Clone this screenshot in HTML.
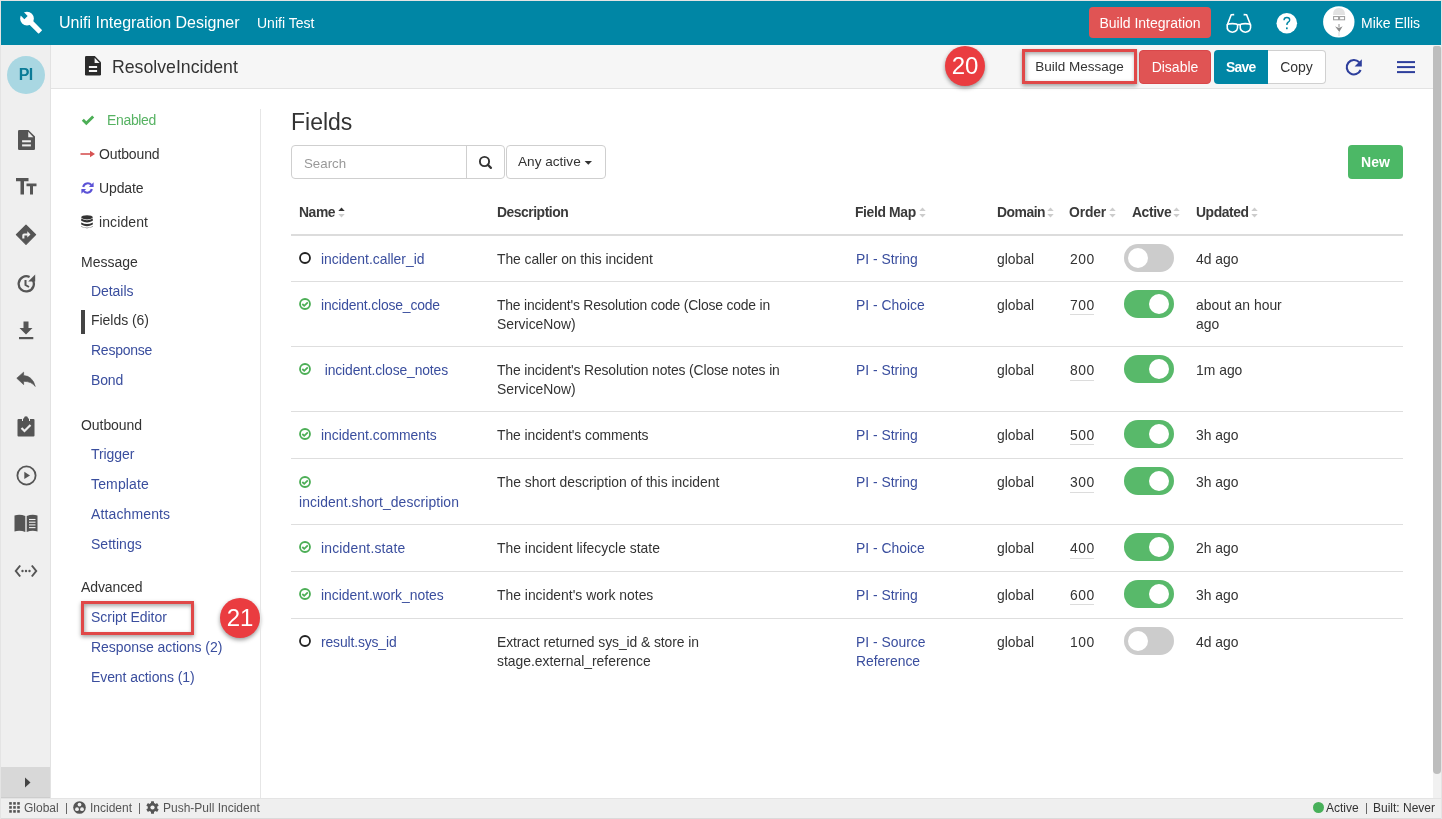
<!DOCTYPE html>
<html><head><meta charset="utf-8">
<style>
*{box-sizing:border-box;margin:0;padding:0}
html,body{width:1442px;height:819px;overflow:hidden;background:#fff;font-family:"Liberation Sans",sans-serif;color:#333}
.a{position:absolute;white-space:nowrap;will-change:transform}
#frame{position:absolute;left:0;top:0;width:1442px;height:819px;border:1px solid #e4e4e4;border-bottom:none;pointer-events:none;z-index:50}
#hdr{position:absolute;left:0;top:0;width:1442px;height:45px;background:#0086a5}
#side{position:absolute;left:0;top:45px;width:51px;height:753px;background:#efefef;border-right:1px solid #e2e2e2}
#ph{position:absolute;left:51px;top:45px;width:1382px;height:44px;background:#f6f6f6;border-bottom:1px solid #e3e3e3}
#status{position:absolute;left:0;top:798px;width:1442px;height:21px;background:#efefef;border-top:1px solid #e4e4e4;border-bottom:1px solid #dadada}
.nav{font-size:14px;color:#333}
.lnk{color:#3a4e9e}
.tbl{font-size:13.9px;color:#333}
.th{font-size:13px;font-weight:bold;color:#3a3a3a}
.btn{position:absolute;border-radius:4px;font-size:14px;text-align:center;white-space:nowrap;will-change:transform}
</style></head><body>
<div id="hdr"></div>
<svg class="a" style="left:0;top:0" width="50" height="45" viewBox="0 0 50 45">
 <g transform="translate(27 18.6) rotate(-45)">
  <circle cx="0" cy="0" r="6.9" fill="#fff"/>
  <rect x="-2.6" y="0" width="5.2" height="19" rx="0.8" fill="#fff"/>
  <rect x="-2.3" y="-8" width="4.6" height="6.6" fill="#0086a5"/>
 </g>
</svg>
<div class="a" id="t_title" style="left:59px;top:13px;font-size:16px;color:#fff;line-height:19px">Unifi Integration Designer</div>
<div class="a" id="t_test" style="left:257px;top:15px;font-size:14px;color:#fff;line-height:17px">Unifi Test</div>
<div class="btn" id="b_bi" style="left:1089px;top:7px;width:122px;height:31px;background:#e05454;color:#fff;line-height:33px">Build Integration</div>
<svg class="a" style="left:1215px;top:0" width="150" height="45" viewBox="1215 0 150 45">
 <g fill="none" stroke="#fff" stroke-width="1.6" stroke-linejoin="round">
  <path d="M1227.2 25.2 Q1227.5 23.6 1232.3 23.6 Q1237.3 23.6 1237.6 25.2 Q1238.3 32 1232.4 32.2 Q1226.6 32 1227.2 25.2 Z"/>
  <path d="M1240.2 25.2 Q1240.5 23.6 1245.3 23.6 Q1250.3 23.6 1250.6 25.2 Q1251.3 32 1245.4 32.2 Q1239.6 32 1240.2 25.2 Z"/>
  <path d="M1237.6 24.6 L1240.2 24.6" stroke-width="1.6"/>
  <path d="M1227.2 25.2 L1231.2 14.8 L1234.2 14.6"/>
  <path d="M1250.6 25.2 L1246.6 14.8 L1243.6 14.6"/>
 </g>
 <circle cx="1286.8" cy="23.2" r="10.3" fill="#fff"/>
 <path d="M1283.3 20.2 Q1283.3 16.8 1286.9 16.8 Q1290.4 16.8 1290.4 19.9 Q1290.4 21.6 1288.6 22.7 Q1287.6 23.4 1287.6 24.9 L1286.2 24.9 Q1286 22.8 1287.5 21.8 Q1289 20.9 1289 19.9 Q1289 18.2 1286.9 18.2 Q1284.8 18.2 1284.7 20.2 Z" fill="#0086a5"/>
 <rect x="1286" y="27.4" width="1.7" height="1.8" fill="#0086a5"/>
 <circle cx="1338.8" cy="21.9" r="15.7" fill="#fff"/>
 <path d="M1333 15 Q1333 8 1339 8 Q1345 8 1345 15 Z" fill="#e2e2e2"/>
 <g fill="none" stroke="#9a9a9a" stroke-width="1"><rect x="1333.6" y="16.6" width="5" height="3.2"/><rect x="1339.6" y="16.6" width="5" height="3.2"/></g>
 <rect x="1338.2" y="24" width="1.6" height="3" fill="#bbb"/>
 <path d="M1335 26.3 Q1339 29 1342.6 26.3 L1339.3 32 Z" fill="#8c8c8c"/>
 <rect x="1338" y="32" width="2" height="4" fill="#ececec"/>
</svg>
<div class="a" id="t_mike" style="left:1361px;top:15px;font-size:14px;color:#fff;line-height:17px">Mike Ellis</div>
<div id="side"></div>
<div class="a" style="left:7px;top:56px;width:38px;height:38px;border-radius:50%;background:#a9d7e2;color:#0b7b97;font-size:16px;font-weight:bold;line-height:38px;text-align:center;letter-spacing:-0.6px;text-indent:-0.6px">PI</div>
<svg class="a" style="left:17.6px;top:129.5px" width="17" height="20" viewBox="0 0 16.6 19.5">
 <path d="M1.3 0 L10.2 0 L16.6 6.3 L16.6 18.2 Q16.6 19.5 15.3 19.5 L1.3 19.5 Q0 19.5 0 18.2 L0 1.3 Q0 0 1.3 0 Z" fill="#555"/>
 <path d="M10 1.7 L10 7 L15 7 Z" fill="#efefef"/>
 <rect x="4" y="10" width="8.6" height="2" fill="#efefef"/>
 <rect x="4" y="14" width="8.6" height="2" fill="#efefef"/>
</svg>
<svg class="a" style="left:16px;top:178px" width="21" height="17" viewBox="0 0 21 17">
 <path d="M0 0 L12.5 0 L12.5 3.3 L8 3.3 L8 16.5 L4.5 16.5 L4.5 3.3 L0 3.3 Z" fill="#555"/>
 <path d="M10.5 5.5 L20.5 5.5 L20.5 8.3 L17 8.3 L17 16.5 L14 16.5 L14 8.3 L10.5 8.3 Z" fill="#555"/>
</svg>
<svg class="a" style="left:15px;top:224px" width="22" height="22" viewBox="0 0 22 22">
 <path d="M11 1.2 L20.6 10.7 L11 20.3 L1.4 10.7 Z" fill="#555" stroke="#555" stroke-linejoin="round" stroke-width="1.2"/>
 <path d="M7.3 14.6 L7.3 11.3 Q7.3 9.5 9.1 9.5 L12.3 9.5 L12.3 7.3 L15.5 10.4 L12.3 13.5 L12.3 11.5 L9.4 11.5 L9.4 14.6 Z" fill="#efefef"/>
</svg>
<svg class="a" style="left:16px;top:273px" width="20" height="21" viewBox="0 0 20 21">
 <path d="M16.5 6.5 A7.6 7.6 0 1 1 13.6 4" fill="none" stroke="#555" stroke-width="2.3"/>
 <path d="M19.2 1.5 L19.2 8.6 L12.2 8.6 Z" fill="#555"/>
 <path d="M9.5 7 L9.5 12 L13 14" fill="none" stroke="#555" stroke-width="2"/>
</svg>
<svg class="a" style="left:17px;top:321px" width="18" height="20" viewBox="0 0 18 20">
 <path d="M6.5 0.5 L11.5 0.5 L11.5 7 L15.5 7 L9 13.5 L2.5 7 L6.5 7 Z" fill="#555"/>
 <rect x="2" y="16" width="14.3" height="2.2" fill="#555"/>
</svg>
<svg class="a" style="left:16px;top:371px" width="20" height="16" viewBox="0 0 20 16">
 <path d="M0.8 7.2 L7.6 1.2 L7.6 4.6 Q16.5 5 19.2 15.4 Q15.5 10.3 7.6 10.3 L7.6 13.6 Z" fill="#555" stroke="#555" stroke-width="0.7" stroke-linejoin="round"/>
</svg>
<svg class="a" style="left:17px;top:416px" width="18" height="21" viewBox="0 0 18 21">
 <path d="M1.5 3 L5 3 L5 5 L13 5 L13 3 L16.5 3 Q17.5 3 17.5 4 L17.5 19.5 Q17.5 20.5 16.5 20.5 L1.5 20.5 Q0.5 20.5 0.5 19.5 L0.5 4 Q0.5 3 1.5 3 Z" fill="#555"/>
 <circle cx="9" cy="2.2" r="2" fill="#555"/><rect x="6" y="2.5" width="6" height="2.5" fill="#555"/>
 <path d="M4.5 12 L7.5 15 L13.5 9" fill="none" stroke="#efefef" stroke-width="2.2"/>
</svg>
<svg class="a" style="left:16px;top:465px" width="21" height="21" viewBox="0 0 21 21">
 <circle cx="10.5" cy="10.5" r="9.1" fill="none" stroke="#555" stroke-width="1.8"/>
 <path d="M8.3 6.8 L14 10.4 L8.3 14 Z" fill="#555"/>
</svg>
<svg class="a" style="left:14px;top:514px" width="24" height="19" viewBox="0 0 24 19">
 <path d="M0.5 1.5 Q6 0 11.3 2 L11.3 18 Q6 16 0.5 17.5 Z" fill="#555"/>
 <path d="M12.7 2 Q18 0 23.5 1.5 L23.5 17.5 Q18 16 12.7 18 Z" fill="#555"/>
 <g stroke="#efefef" stroke-width="1.1"><path d="M15 5.5 L21.5 5.5"/><path d="M15 8.2 L21.5 8.2"/><path d="M15 10.9 L21.5 10.9"/><path d="M15 13.6 L21.5 13.6"/></g>
</svg>
<svg class="a" style="left:14px;top:564px" width="24" height="14" viewBox="0 0 24 14">
 <path d="M6.2 1.5 L1.8 7 L6.2 12.5" fill="none" stroke="#555" stroke-width="2"/>
 <path d="M17.8 1.5 L22.2 7 L17.8 12.5" fill="none" stroke="#555" stroke-width="2"/>
 <circle cx="8.5" cy="7" r="1.2" fill="#555"/><circle cx="12" cy="7" r="1.2" fill="#555"/><circle cx="15.5" cy="7" r="1.2" fill="#555"/>
</svg>
<div class="a" style="left:0;top:767px;width:50px;height:31px;background:#d8d8d8;border-bottom:1px solid #cdcdcd"></div>
<svg class="a" style="left:24px;top:777px" width="8" height="11" viewBox="0 0 8 11"><path d="M1 0.5 L6.5 5.5 L1 10.5 Z" fill="#444"/></svg>
<div id="ph"></div>
<svg class="a" style="left:85px;top:56px" width="16" height="20" viewBox="0 0 16 20">
 <path d="M1.3 0 L9.8 0 L16 6.2 L16 18.3 Q16 19.6 14.7 19.6 L1.3 19.6 Q0 19.6 0 18.3 L0 1.3 Q0 0 1.3 0 Z" fill="#2b2b2b"/>
 <path d="M9.6 1.7 L9.6 7 L14.6 7 Z" fill="#f6f6f6"/>
 <rect x="3.9" y="10" width="8.2" height="2" fill="#f6f6f6"/>
 <rect x="3.9" y="14" width="8.2" height="2" fill="#f6f6f6"/>
</svg>
<div class="a" id="t_ri" style="left:112px;top:57px;font-size:17.7px;color:#333;line-height:21px">ResolveIncident</div>
<div class="a" style="left:945px;top:46px;width:40px;height:40px;border-radius:50%;background:#ea3c40;box-shadow:0 2px 4px rgba(0,0,0,.4);color:#fff;font-size:24px;line-height:39px;text-align:center">20</div>
<div class="btn" id="b_bm" style="left:1022px;top:49px;width:115px;height:35px;border:3px solid #e04848;border-radius:0;background:#fff;color:#333;line-height:29px;font-size:13.5px;box-shadow:0 2px 4px rgba(0,0,0,.35), inset 1px 2px 4px rgba(0,0,0,.35)">Build Message</div>
<div class="btn" id="b_dis" style="left:1139px;top:50px;width:72px;height:34px;background:#e05454;border:1px solid #d9474a;color:#fff;line-height:32px">Disable</div>
<div class="btn" id="b_save" style="left:1214px;top:50px;width:54px;height:34px;background:#0086a5;color:#fff;line-height:34px;border-radius:4px 0 0 4px;font-weight:bold;font-size:13.9px;letter-spacing:-0.7px;text-indent:-0.5px">Save</div>
<div class="btn" id="b_copy" style="left:1268px;top:50px;width:58px;height:34px;background:#fff;color:#333;line-height:32px;border:1px solid #d0d0d0;border-left:none;border-radius:0 4px 4px 0">Copy</div>
<svg class="a" style="left:1340px;top:55px" width="80" height="25" viewBox="1340 55 80 25">
 <path d="M1359.2 62.3 A7.2 7.2 0 1 0 1360.6 70" fill="none" stroke="#2e3f9c" stroke-width="2.1"/>
 <path d="M1361.8 59.2 L1361.8 66.6 L1354.6 66.6 Z" fill="#2e3f9c"/>
 <rect x="1397" y="61.1" width="18" height="2" fill="#2e3f9c"/>
 <rect x="1397" y="66.1" width="18" height="2" fill="#2e3f9c"/>
 <rect x="1397" y="71.1" width="18" height="2" fill="#2e3f9c"/>
</svg>
<svg class="a" style="left:81px;top:115px" width="14" height="11" viewBox="0 0 14 11"><path d="M0.8 5.8 L2.8 3.8 L5.3 6.3 L11.2 0.4 L13.2 2.4 L5.3 10.3 Z" fill="#4cae56"/></svg>
<div class="a nav" id="nv0" style="left:106.5px;top:112.15px;line-height:17px;font-size:14px;color:#56b262;letter-spacing:-0.341px">Enabled</div>
<svg class="a" style="left:80px;top:150px" width="16" height="8" viewBox="0 0 16 8"><path d="M0.5 4 L11 4" stroke="#d65353" stroke-width="1.6"/><path d="M10 0.8 L15 4 L10 7.2 Z" fill="#d65353"/></svg>
<div class="a nav" id="nv1" style="left:98.7px;top:145.65px;line-height:17px;font-size:14px;letter-spacing:-0.124px">Outbound</div>
<svg class="a" style="left:81px;top:182px" width="13" height="12" viewBox="0 0 13 12">
 <path d="M2.2 5 A4.6 4.6 0 0 1 10.3 3" fill="none" stroke="#5b52d6" stroke-width="2.1"/>
 <path d="M12.6 0.3 L12.6 5 L7.9 5 Z" fill="#5b52d6"/>
 <path d="M10.8 7 A4.6 4.6 0 0 1 2.7 9" fill="none" stroke="#5b52d6" stroke-width="2.1"/>
 <path d="M0.4 11.7 L0.4 7 L5.1 7 Z" fill="#5b52d6"/>
</svg>
<div class="a nav" id="nv3" style="left:98.7px;top:179.75px;line-height:17px;font-size:14px;letter-spacing:-0.108px">Update</div>
<svg class="a" style="left:81px;top:215px" width="12" height="14" viewBox="0 0 12 14">
 <ellipse cx="6" cy="2.3" rx="5.8" ry="2.1" fill="#333"/>
 <path d="M0.2 3.6 Q6 6.8 11.8 3.6 L11.8 5.8 Q6 9 0.2 5.8 Z" fill="#333"/>
 <path d="M0.2 7.4 Q6 10.6 11.8 7.4 L11.8 9.6 Q6 12.8 0.2 9.6 Z" fill="#333"/>
 <path d="M0.2 11.2 Q6 14.2 11.8 11.2 L11.8 11.8 Q6 14.6 0.2 11.8 Z" fill="#333"/>
</svg>
<div class="a nav" id="nv4" style="left:98.7px;top:213.85px;line-height:17px;font-size:14px;letter-spacing:0.107px">incident</div>
<div class="a nav" id="nv5" style="left:80.6px;top:254.15px;line-height:17px;font-size:14px;letter-spacing:-0.002px">Message</div>
<div class="a nav lnk" id="nv6" style="left:90.8px;top:283.05px;line-height:17px;font-size:14px;letter-spacing:-0.057px">Details</div>
<div class="a" style="left:81px;top:310px;width:4px;height:24px;background:#444"></div>
<div class="a nav" id="nv7" style="left:90.8px;top:311.85px;line-height:17px;font-size:14px;letter-spacing:-0.035px">Fields (6)</div>
<div class="a nav lnk" id="nv8" style="left:90.8px;top:341.95px;line-height:17px;font-size:14px;letter-spacing:-0.244px">Response</div>
<div class="a nav lnk" id="nv9" style="left:90.8px;top:372.05px;line-height:17px;font-size:14px;letter-spacing:-0.174px">Bond</div>
<div class="a nav" id="nv2" style="left:80.6px;top:416.75px;line-height:17px;font-size:14px;letter-spacing:-0.063px">Outbound</div>
<div class="a nav lnk" id="nv10" style="left:90.8px;top:445.95px;line-height:17px;font-size:14px;letter-spacing:-0.077px">Trigger</div>
<div class="a nav lnk" id="nv11" style="left:90.8px;top:475.95px;line-height:17px;font-size:14px;letter-spacing:0.149px">Template</div>
<div class="a nav lnk" id="nv12" style="left:90.8px;top:505.85px;line-height:17px;font-size:14px;letter-spacing:0.126px">Attachments</div>
<div class="a nav lnk" id="nv13" style="left:90.8px;top:535.55px;line-height:17px;font-size:14px;letter-spacing:0.013px">Settings</div>
<div class="a nav" id="nv14" style="left:80.6px;top:579.15px;line-height:17px;font-size:14px;letter-spacing:-0.096px">Advanced</div>
<div class="a nav lnk" id="nv15" style="left:90.8px;top:608.75px;line-height:17px;font-size:14px;letter-spacing:-0.035px">Script Editor</div>
<div class="a" style="left:81px;top:601px;width:113px;height:33.5px;border:3px solid #e04848;box-shadow:0 2px 4px rgba(0,0,0,.35), inset 1px 2px 4px rgba(0,0,0,.35)"></div>
<div class="a" style="left:220px;top:598px;width:40px;height:40px;border-radius:50%;background:#ea3c40;box-shadow:0 2px 4px rgba(0,0,0,.4);color:#fff;font-size:24px;line-height:39px;text-align:center">21</div>
<div class="a nav lnk" id="nv16" style="left:90.8px;top:639.05px;line-height:17px;font-size:14px;letter-spacing:-0.049px">Response actions (2)</div>
<div class="a nav lnk" id="nv17" style="left:90.8px;top:668.65px;line-height:17px;font-size:14px;letter-spacing:-0.085px">Event actions (1)</div>
<div class="a" style="left:260px;top:109px;width:1px;height:689px;background:#e6e6e6"></div>
<div class="a" id="m_fields" style="left:290.5px;top:109px;font-size:23px;line-height:27px;color:#333">Fields</div>
<div class="a" style="left:291px;top:145px;width:214px;height:34px;border:1px solid #cfcfcf;border-radius:4px;background:#fff"></div>
<div class="a" style="left:466px;top:146px;width:1px;height:32px;background:#cfcfcf"></div>
<div class="a" id="m_search" style="left:303.5px;top:153.5px;font-size:13.3px;line-height:19px;color:#999">Search</div>
<svg class="a" style="left:478px;top:155px" width="15" height="15" viewBox="0 0 15 15"><circle cx="6.5" cy="6.5" r="4.6" fill="none" stroke="#333" stroke-width="1.9"/><path d="M9.8 9.8 L12.9 12.9" stroke="#333" stroke-width="2.3" stroke-linecap="round"/></svg>
<div class="a" style="left:505.5px;top:145px;width:99.5px;height:34px;border:1px solid #cfcfcf;border-radius:4px;background:#fff"></div>
<div class="a" id="m_any" style="left:517.5px;top:152.3px;font-size:13.6px;line-height:19px;color:#333">Any active</div>
<svg class="a" style="left:584px;top:160px" width="9" height="6" viewBox="0 0 9 6"><path d="M0.6 1 L8 1 L4.3 4.8 Z" fill="#333"/></svg>
<div class="btn" style="left:1348px;top:145px;width:55px;height:34px;background:#4cb866;color:#fff;font-weight:bold;font-size:14px;line-height:34px">New</div>
<div class="a th" id="th0" style="left:299.3px;top:204px;line-height:17px;font-size:13.9px;letter-spacing:-0.433px">Name</div>
<svg class="a" style="left:338px;top:207px" width="7" height="11" viewBox="0 0 7 11"><path d="M0.3 3.9 L3.5 0.6 L6.7 3.9 Z" fill="#333"/><path d="M0.3 6.9 L3.5 10.4 L6.7 6.9 Z" fill="#ccc"/></svg>
<div class="a th" id="th1" style="left:497px;top:204px;line-height:17px;font-size:13.9px;letter-spacing:-0.475px">Description</div>
<div class="a th" id="th2" style="left:855.2px;top:204px;line-height:17px;font-size:13.9px;letter-spacing:-0.361px">Field Map</div>
<svg class="a" style="left:918.5px;top:207px" width="7" height="11" viewBox="0 0 7 11"><path d="M0.3 3.9 L3.5 0.6 L6.7 3.9 Z" fill="#ccc"/><path d="M0.3 6.9 L3.5 10.4 L6.7 6.9 Z" fill="#ccc"/></svg>
<div class="a th" id="th3" style="left:996.8px;top:204px;line-height:17px;font-size:13.9px;letter-spacing:-0.474px">Domain</div>
<svg class="a" style="left:1046.5px;top:207px" width="7" height="11" viewBox="0 0 7 11"><path d="M0.3 3.9 L3.5 0.6 L6.7 3.9 Z" fill="#ccc"/><path d="M0.3 6.9 L3.5 10.4 L6.7 6.9 Z" fill="#ccc"/></svg>
<div class="a th" id="th4" style="left:1069.3px;top:204px;line-height:17px;font-size:13.9px;letter-spacing:-0.165px">Order</div>
<svg class="a" style="left:1108.5px;top:207px" width="7" height="11" viewBox="0 0 7 11"><path d="M0.3 3.9 L3.5 0.6 L6.7 3.9 Z" fill="#ccc"/><path d="M0.3 6.9 L3.5 10.4 L6.7 6.9 Z" fill="#ccc"/></svg>
<div class="a th" id="th5" style="left:1131.8px;top:204px;line-height:17px;font-size:13.9px;letter-spacing:-0.417px">Active</div>
<svg class="a" style="left:1172.5px;top:207px" width="7" height="11" viewBox="0 0 7 11"><path d="M0.3 3.9 L3.5 0.6 L6.7 3.9 Z" fill="#ccc"/><path d="M0.3 6.9 L3.5 10.4 L6.7 6.9 Z" fill="#ccc"/></svg>
<div class="a th" id="th6" style="left:1196px;top:204px;line-height:17px;font-size:13.9px;letter-spacing:-0.424px">Updated</div>
<svg class="a" style="left:1250.5px;top:207px" width="7" height="11" viewBox="0 0 7 11"><path d="M0.3 3.9 L3.5 0.6 L6.7 3.9 Z" fill="#ccc"/><path d="M0.3 6.9 L3.5 10.4 L6.7 6.9 Z" fill="#ccc"/></svg>
<div class="a" style="left:291px;top:234px;width:1112px;height:2px;background:#dcdcdc"></div>
<div class="a" style="left:291px;top:281px;width:1112px;height:1px;background:#dedede"></div>
<div class="a" style="left:291px;top:346px;width:1112px;height:1px;background:#dedede"></div>
<div class="a" style="left:291px;top:411px;width:1112px;height:1px;background:#dedede"></div>
<div class="a" style="left:291px;top:458px;width:1112px;height:1px;background:#dedede"></div>
<div class="a" style="left:291px;top:524px;width:1112px;height:1px;background:#dedede"></div>
<div class="a" style="left:291px;top:571px;width:1112px;height:1px;background:#dedede"></div>
<div class="a" style="left:291px;top:618px;width:1112px;height:1px;background:#dedede"></div>
<svg class="a" style="left:299px;top:252px" width="12" height="12" viewBox="0 0 12 12"><circle cx="6" cy="6" r="5" fill="none" stroke="#222" stroke-width="1.8"/></svg>
<div class="a tbl" id="r_n0" style="left:320.5px;top:249.8px;line-height:19px;color:#3a4e9e;">incident.caller_id</div>
<div class="a tbl" id="r_d0" style="left:496.5px;top:249.8px;line-height:19px;color:#333;letter-spacing:-0.064px">The caller on this incident</div>
<div class="a tbl" style="left:855.5px;top:249.8px;line-height:19px;color:#3a4e9e;">PI - String</div>
<div class="a tbl" style="left:996.5px;top:249.8px;line-height:19px;color:#333;">global</div>
<div class="a tbl" style="left:1069.5px;top:249.8px;line-height:19px;color:#333;letter-spacing:0.5px">200</div>
<div class="a" style="left:1124px;top:244px;width:50px;height:28px;border-radius:14px;background:#cccccc"><div style="position:absolute;left:3.7px;top:3.7px;width:20.6px;height:20.6px;border-radius:50%;background:#fff"></div></div>
<div class="a tbl" style="left:1195.5px;top:249.8px;line-height:19px;color:#333;">4d ago</div>
<svg class="a" style="left:299px;top:298px" width="12" height="12" viewBox="0 0 12 12"><circle cx="6" cy="6" r="5" fill="none" stroke="#4cae56" stroke-width="1.8"/><path d="M3.3 6 L5.2 7.8 L8.8 4.3" fill="none" stroke="#4cae56" stroke-width="1.8"/></svg>
<div class="a tbl" id="r_n1" style="left:320.5px;top:295.8px;line-height:19px;color:#3a4e9e;letter-spacing:-0.164px">incident.close_code</div>
<div class="a tbl" id="r_d1" style="left:496.5px;top:295.8px;line-height:19px;color:#333;letter-spacing:-0.187px">The incident's Resolution code (Close code in</div>
<div class="a tbl" style="left:496.5px;top:314.8px;line-height:19px;color:#333;">ServiceNow)</div>
<div class="a tbl" style="left:855.5px;top:295.8px;line-height:19px;color:#3a4e9e;">PI - Choice</div>
<div class="a tbl" style="left:996.5px;top:295.8px;line-height:19px;color:#333;">global</div>
<div class="a tbl" style="left:1069.5px;top:295.8px;line-height:19px;color:#333;letter-spacing:0.5px">700</div>
<div class="a" style="left:1070px;top:314px;width:24px;height:1px;background:#dcdcdc"></div>
<div class="a" style="left:1124px;top:290px;width:50px;height:28px;border-radius:14px;background:#58b96a"><div style="position:absolute;left:24.8px;top:3.7px;width:20.6px;height:20.6px;border-radius:50%;background:#fff"></div></div>
<div class="a tbl" style="left:1195.5px;top:295.8px;line-height:19px;color:#333;">about an hour</div>
<div class="a tbl" style="left:1195.5px;top:314.8px;line-height:19px;color:#333;">ago</div>
<svg class="a" style="left:299px;top:363px" width="12" height="12" viewBox="0 0 12 12"><circle cx="6" cy="6" r="5" fill="none" stroke="#4cae56" stroke-width="1.8"/><path d="M3.3 6 L5.2 7.8 L8.8 4.3" fill="none" stroke="#4cae56" stroke-width="1.8"/></svg>
<div class="a tbl" id="r_n2" style="left:320.5px;top:360.8px;line-height:19px;color:#3a4e9e;letter-spacing:-0.130px">&nbsp;incident.close_notes</div>
<div class="a tbl" id="r_d2" style="left:496.5px;top:360.8px;line-height:19px;color:#333;letter-spacing:-0.137px">The incident's Resolution notes (Close notes in</div>
<div class="a tbl" style="left:496.5px;top:379.8px;line-height:19px;color:#333;">ServiceNow)</div>
<div class="a tbl" style="left:855.5px;top:360.8px;line-height:19px;color:#3a4e9e;">PI - String</div>
<div class="a tbl" style="left:996.5px;top:360.8px;line-height:19px;color:#333;">global</div>
<div class="a tbl" style="left:1069.5px;top:360.8px;line-height:19px;color:#333;letter-spacing:0.5px">800</div>
<div class="a" style="left:1070px;top:380px;width:24px;height:1px;background:#dcdcdc"></div>
<div class="a" style="left:1124px;top:355px;width:50px;height:28px;border-radius:14px;background:#58b96a"><div style="position:absolute;left:24.8px;top:3.7px;width:20.6px;height:20.6px;border-radius:50%;background:#fff"></div></div>
<div class="a tbl" style="left:1195.5px;top:360.8px;line-height:19px;color:#333;">1m ago</div>
<svg class="a" style="left:299px;top:428px" width="12" height="12" viewBox="0 0 12 12"><circle cx="6" cy="6" r="5" fill="none" stroke="#4cae56" stroke-width="1.8"/><path d="M3.3 6 L5.2 7.8 L8.8 4.3" fill="none" stroke="#4cae56" stroke-width="1.8"/></svg>
<div class="a tbl" id="r_n3" style="left:320.5px;top:425.8px;line-height:19px;color:#3a4e9e;">incident.comments</div>
<div class="a tbl" id="r_d3" style="left:496.5px;top:425.8px;line-height:19px;color:#333;letter-spacing:-0.074px">The incident's comments</div>
<div class="a tbl" style="left:855.5px;top:425.8px;line-height:19px;color:#3a4e9e;">PI - String</div>
<div class="a tbl" style="left:996.5px;top:425.8px;line-height:19px;color:#333;">global</div>
<div class="a tbl" style="left:1069.5px;top:425.8px;line-height:19px;color:#333;letter-spacing:0.5px">500</div>
<div class="a" style="left:1070px;top:444px;width:24px;height:1px;background:#dcdcdc"></div>
<div class="a" style="left:1124px;top:420px;width:50px;height:28px;border-radius:14px;background:#58b96a"><div style="position:absolute;left:24.8px;top:3.7px;width:20.6px;height:20.6px;border-radius:50%;background:#fff"></div></div>
<div class="a tbl" style="left:1195.5px;top:425.8px;line-height:19px;color:#333;">3h ago</div>
<svg class="a" style="left:299px;top:476px" width="12" height="12" viewBox="0 0 12 12"><circle cx="6" cy="6" r="5" fill="none" stroke="#4cae56" stroke-width="1.8"/><path d="M3.3 6 L5.2 7.8 L8.8 4.3" fill="none" stroke="#4cae56" stroke-width="1.8"/></svg>
<div class="a tbl" id="r_sd" style="left:298.5px;top:492.8px;line-height:19px;color:#3a4e9e;letter-spacing:0.095px">incident.short_description</div>
<div class="a tbl" id="r_d4" style="left:496.5px;top:472.8px;line-height:19px;color:#333;">The short description of this incident</div>
<div class="a tbl" style="left:855.5px;top:472.8px;line-height:19px;color:#3a4e9e;">PI - String</div>
<div class="a tbl" style="left:996.5px;top:472.8px;line-height:19px;color:#333;">global</div>
<div class="a tbl" style="left:1069.5px;top:472.8px;line-height:19px;color:#333;letter-spacing:0.5px">300</div>
<div class="a" style="left:1070px;top:492px;width:24px;height:1px;background:#dcdcdc"></div>
<div class="a" style="left:1124px;top:467px;width:50px;height:28px;border-radius:14px;background:#58b96a"><div style="position:absolute;left:24.8px;top:3.7px;width:20.6px;height:20.6px;border-radius:50%;background:#fff"></div></div>
<div class="a tbl" style="left:1195.5px;top:472.8px;line-height:19px;color:#333;">3h ago</div>
<svg class="a" style="left:299px;top:541px" width="12" height="12" viewBox="0 0 12 12"><circle cx="6" cy="6" r="5" fill="none" stroke="#4cae56" stroke-width="1.8"/><path d="M3.3 6 L5.2 7.8 L8.8 4.3" fill="none" stroke="#4cae56" stroke-width="1.8"/></svg>
<div class="a tbl" id="r_n5" style="left:320.5px;top:538.8px;line-height:19px;color:#3a4e9e;letter-spacing:0.189px">incident.state</div>
<div class="a tbl" id="r_d5" style="left:496.5px;top:538.8px;line-height:19px;color:#333;">The incident lifecycle state</div>
<div class="a tbl" style="left:855.5px;top:538.8px;line-height:19px;color:#3a4e9e;">PI - Choice</div>
<div class="a tbl" style="left:996.5px;top:538.8px;line-height:19px;color:#333;">global</div>
<div class="a tbl" style="left:1069.5px;top:538.8px;line-height:19px;color:#333;letter-spacing:0.5px">400</div>
<div class="a" style="left:1070px;top:558px;width:24px;height:1px;background:#dcdcdc"></div>
<div class="a" style="left:1124px;top:533px;width:50px;height:28px;border-radius:14px;background:#58b96a"><div style="position:absolute;left:24.8px;top:3.7px;width:20.6px;height:20.6px;border-radius:50%;background:#fff"></div></div>
<div class="a tbl" style="left:1195.5px;top:538.8px;line-height:19px;color:#333;">2h ago</div>
<svg class="a" style="left:299px;top:588px" width="12" height="12" viewBox="0 0 12 12"><circle cx="6" cy="6" r="5" fill="none" stroke="#4cae56" stroke-width="1.8"/><path d="M3.3 6 L5.2 7.8 L8.8 4.3" fill="none" stroke="#4cae56" stroke-width="1.8"/></svg>
<div class="a tbl" id="r_n6" style="left:320.5px;top:585.8px;line-height:19px;color:#3a4e9e;">incident.work_notes</div>
<div class="a tbl" id="r_d6" style="left:496.5px;top:585.8px;line-height:19px;color:#333;">The incident's work notes</div>
<div class="a tbl" style="left:855.5px;top:585.8px;line-height:19px;color:#3a4e9e;">PI - String</div>
<div class="a tbl" style="left:996.5px;top:585.8px;line-height:19px;color:#333;">global</div>
<div class="a tbl" style="left:1069.5px;top:585.8px;line-height:19px;color:#333;letter-spacing:0.5px">600</div>
<div class="a" style="left:1070px;top:604px;width:24px;height:1px;background:#dcdcdc"></div>
<div class="a" style="left:1124px;top:580px;width:50px;height:28px;border-radius:14px;background:#58b96a"><div style="position:absolute;left:24.8px;top:3.7px;width:20.6px;height:20.6px;border-radius:50%;background:#fff"></div></div>
<div class="a tbl" style="left:1195.5px;top:585.8px;line-height:19px;color:#333;">3h ago</div>
<svg class="a" style="left:299px;top:635px" width="12" height="12" viewBox="0 0 12 12"><circle cx="6" cy="6" r="5" fill="none" stroke="#222" stroke-width="1.8"/></svg>
<div class="a tbl" id="r_n7" style="left:320.5px;top:632.8px;line-height:19px;color:#3a4e9e;letter-spacing:-0.131px">result.sys_id</div>
<div class="a tbl" id="r_d7" style="left:496.5px;top:632.8px;line-height:19px;color:#333;letter-spacing:-0.082px">Extract returned sys_id &amp; store in</div>
<div class="a tbl" style="left:496.5px;top:651.8px;line-height:19px;color:#333;">stage.external_reference</div>
<div class="a tbl" style="left:855.5px;top:632.8px;line-height:19px;color:#3a4e9e;">PI - Source</div>
<div class="a tbl" style="left:855.5px;top:651.8px;line-height:19px;color:#3a4e9e;">Reference</div>
<div class="a tbl" style="left:996.5px;top:632.8px;line-height:19px;color:#333;">global</div>
<div class="a tbl" style="left:1069.5px;top:632.8px;line-height:19px;color:#333;letter-spacing:0.5px">100</div>
<div class="a" style="left:1124px;top:627px;width:50px;height:28px;border-radius:14px;background:#cccccc"><div style="position:absolute;left:3.7px;top:3.7px;width:20.6px;height:20.6px;border-radius:50%;background:#fff"></div></div>
<div class="a tbl" style="left:1195.5px;top:632.8px;line-height:19px;color:#333;">4d ago</div>
<div id="status"></div>
<svg class="a" style="left:9px;top:802px" width="11" height="11" viewBox="0 0 11 11"><g fill="#555"><rect x="0.2" y="0.1" width="2.6" height="2.6"/><rect x="4.2" y="0.1" width="2.6" height="2.6"/><rect x="8.2" y="0.1" width="2.6" height="2.6"/><rect x="0.2" y="4.1" width="2.6" height="2.6"/><rect x="4.2" y="4.1" width="2.6" height="2.6"/><rect x="8.2" y="4.1" width="2.6" height="2.6"/><rect x="0.2" y="8.1" width="2.6" height="2.6"/><rect x="4.2" y="8.1" width="2.6" height="2.6"/><rect x="8.2" y="8.1" width="2.6" height="2.6"/></g></svg>
<div class="a" id="s_glob" style="left:24px;top:801px;font-size:12px;line-height:15px;color:#555">Global</div>
<div class="a" style="left:65.5px;top:803px;width:1.1px;height:11px;background:#666"></div>
<svg class="a" style="left:73px;top:801px" width="13" height="13" viewBox="0 0 13 13">
 <circle cx="6.5" cy="6.5" r="6.3" fill="#555"/>
 <circle cx="6.5" cy="3.6" r="1.9" fill="#efefef"/><circle cx="4" cy="8.2" r="1.9" fill="#efefef"/><circle cx="9" cy="8.2" r="1.9" fill="#efefef"/>
</svg>
<div class="a" id="s_inc" style="left:89.5px;top:801px;font-size:12px;line-height:15px;color:#555">Incident</div>
<div class="a" style="left:138.5px;top:803px;width:1.1px;height:11px;background:#666"></div>
<svg class="a" style="left:146px;top:801px" width="13" height="13" viewBox="0 0 13 13">
 <g fill="#555"><circle cx="6.5" cy="6.5" r="4.7"/>
 <rect x="5" y="0.2" width="3" height="12.6" rx="0.5"/>
 <rect x="5" y="0.2" width="3" height="12.6" rx="0.5" transform="rotate(60 6.5 6.5)"/>
 <rect x="5" y="0.2" width="3" height="12.6" rx="0.5" transform="rotate(120 6.5 6.5)"/></g>
 <circle cx="6.5" cy="6.5" r="2.1" fill="#efefef"/>
</svg>
<div class="a" id="s_pp" style="left:162.5px;top:801px;font-size:12px;line-height:15px;color:#555">Push-Pull Incident</div>
<div class="a" style="left:1313px;top:802px;width:11px;height:11px;border-radius:50%;background:#48b05a"></div>
<div class="a" id="s_act" style="left:1326px;top:801px;font-size:12px;line-height:15px;color:#333">Active</div>
<div class="a" style="left:1365.5px;top:803px;width:1.1px;height:11px;background:#666"></div>
<div class="a" id="s_blt" style="left:1372.5px;top:801px;font-size:12px;line-height:15px;color:#333">Built: Never</div>
<div class="a" style="left:1433px;top:45px;width:8px;height:753px;background:#f1f1f1"></div>
<div class="a" style="left:1433px;top:46px;width:8px;height:728px;border-radius:2px 2px 4px 4px;background:#bdbdbd"></div>
<div id="frame"></div>
</body></html>
